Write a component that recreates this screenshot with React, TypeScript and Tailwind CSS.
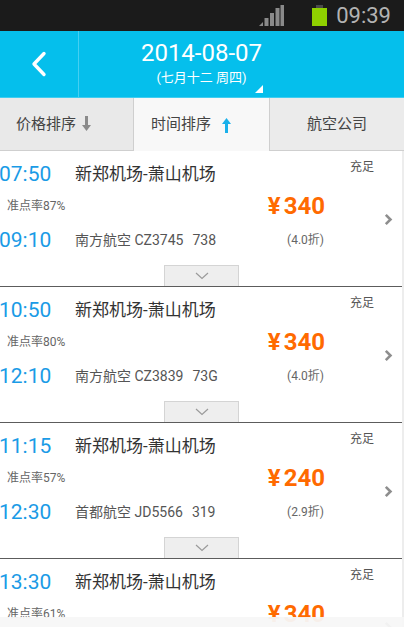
import React from "react";

type Flight = {
  dep: string;
  arr: string;
  rate: string;
  price: string;
  airline: string;
  no: string;
  plane: string;
  discount: string;
};

const flights: Flight[] = [
  { dep: "07:50", arr: "09:10", rate: "87%", price: "340", airline: "南方航空", no: "CZ3745", plane: "738", discount: "(4.0折)" },
  { dep: "10:50", arr: "12:10", rate: "80%", price: "340", airline: "南方航空", no: "CZ3839", plane: "73G", discount: "(4.0折)" },
  { dep: "11:15", arr: "12:30", rate: "57%", price: "240", airline: "首都航空", no: "JD5566", plane: "319", discount: "(2.9折)" },
  { dep: "13:30", arr: "14:50", rate: "61%", price: "340", airline: "南方航空", no: "CZ3855", plane: "738", discount: "(4.0折)" },
];

function FlightCard({ f }: { f: Flight }) {
  return (
    <div className="relative h-[136px] shrink-0 border-b border-[#5c5c5c] flex flex-col">
      <div className="pt-[10px] h-[36px] flex">
        <div className="w-[76px] h-[26px] flex items-center text-[21px] leading-none text-[#1a9be6] -ml-[1px]">{f.dep}</div>
        <div className="flex-1 h-[26px] flex items-center text-[17px] leading-none text-[#333]">新郑机场-萧山机场</div>
        <div className="w-[52px] self-start text-[12px] leading-[12px] text-[#555]">充足</div>
      </div>
      <div className="mt-[4px] h-[30px] flex items-center">
        <div className="w-[240px] pl-[7px] text-[12px] leading-none text-[#666]">准点率{f.rate}</div>
        <div className="w-[85px] text-right text-[24px] leading-none font-bold text-[#ff6a00] whitespace-nowrap">
          <span className="mr-[3px]">¥</span>
          {f.price}
        </div>
      </div>
      <div className="mt-[4px] h-[30px] flex items-center">
        <div className="w-[76px] text-[21px] leading-none text-[#1a9be6] -ml-[1px]">{f.arr}</div>
        <div className="w-[164px] text-[14px] leading-none text-[#555] whitespace-nowrap">
          {f.airline} {f.no}
          <span className="ml-[9px]">{f.plane}</span>
        </div>
        <div className="w-[85px] text-right text-[12px] leading-none text-[#666]">{f.discount}</div>
      </div>
      <div className="mt-auto ml-[164px] w-[75px] h-[21px] bg-[#eeeeee] border border-b-0 border-[#d4d4d4] flex items-center justify-center">
        <svg width="14" height="8" viewBox="0 0 14 8">
          <path d="M1 1 L7 6.5 L13 1" fill="none" stroke="#9a9a9a" strokeWidth="1.2" />
        </svg>
      </div>
      <svg className="absolute right-[9px] top-[62px]" width="9" height="13" viewBox="0 0 9 13">
        <path d="M1.8 1.8 L6.5 6.5 L1.8 11.2" fill="none" stroke="#8e8e8e" strokeWidth="2.6" />
      </svg>
    </div>
  );
}

export default function App() {
  return (
    <div className="relative w-[404px] h-[627px] overflow-hidden bg-white font-['Roboto','Noto_Sans_CJK_SC',sans-serif]">
      {/* status bar */}
      <div className="h-[31px] bg-[#1b1b1b] flex items-center justify-end pr-[13px]">
        <svg width="25" height="22" viewBox="0 0 25 22" className="mr-[28px]">
          <path d="M0 21 L4 17 L4 21 Z" fill="#8a8a8a" />
          <rect x="5.5" y="13" width="4" height="8" fill="#8a8a8a" />
          <rect x="11" y="8" width="4" height="13" fill="#8a8a8a" />
          <rect x="16.5" y="3" width="4" height="18" fill="#8a8a8a" />
          <rect x="21.5" y="0" width="3.5" height="21" fill="#8a8a8a" />
        </svg>
        <div className="flex flex-col items-center mr-[9px] h-[21px]">
          <div className="w-[7px] h-[3px] bg-[#4a4a4a]" />
          <div className="w-[15px] h-[18px] bg-[#8fd100]" />
        </div>
        <div className="text-[22px] leading-none text-[#b3b3b3]">09:39</div>
      </div>

      {/* header */}
      <div className="h-[67px] bg-[#05bfec] flex border-b border-[#40cdf0]">
        <div className="w-[79px] flex items-center justify-center border-r border-[#45cff2]">
          <svg width="18" height="26" viewBox="0 0 18 26">
            <path d="M14 2.5 L4 13 L14 23.5" fill="none" stroke="white" strokeWidth="3.4" strokeLinecap="round" strokeLinejoin="round" />
          </svg>
        </div>
        <div className="flex-1 pr-[80px] flex flex-col items-center pt-[9px]">
          <div className="relative flex flex-col items-center">
            <div className="text-[24px] leading-[26px] text-white">2014-08-07</div>
            <div className="mt-[4px] text-[13px] leading-[15px] text-white">(七月十二 周四)</div>
            <svg className="absolute left-[114px] top-[45px]" width="8" height="8" viewBox="0 0 8 8">
              <path d="M8 0 L8 8 L0 8 Z" fill="white" />
            </svg>
          </div>
        </div>
      </div>

      {/* tabs */}
      <div className="h-[53px] flex text-[15px] text-[#444]">
        <div className="w-[134px] bg-[#e9e9e9] border-r border-b border-[#cfcfcf] flex items-center pl-[16px]">
          <span>价格排序</span>
          <svg className="ml-[6px]" width="9" height="16" viewBox="0 0 9 16">
            <rect x="3" y="0" width="3" height="10" fill="#8a8a8a" />
            <path d="M0 9 L9 9 L4.5 15 Z" fill="#8a8a8a" />
          </svg>
        </div>
        <div className="w-[135px] bg-[#f8f8f8] flex items-center pl-[17px]">
          <span>时间排序</span>
          <svg className="ml-[11px]" width="9" height="16" viewBox="0 0 9 16">
            <path d="M0 7 L9 7 L4.5 1 Z" fill="#1ab0ea" />
            <rect x="3" y="6" width="3" height="10" fill="#1ab0ea" />
          </svg>
        </div>
        <div className="flex-1 bg-[#ebebeb] border-l border-b border-[#cfcfcf] flex items-center justify-center">
          航空公司
        </div>
      </div>

      {/* list */}
      <div className="flex flex-col border-r-2 border-[#ededed]">
        {flights.map((f) => (
          <FlightCard key={f.dep} f={f} />
        ))}
      </div>

      <div className="absolute left-0 right-0 bottom-0 h-[10px] bg-[#f7f7f7]/95" />
    </div>
  );
}
